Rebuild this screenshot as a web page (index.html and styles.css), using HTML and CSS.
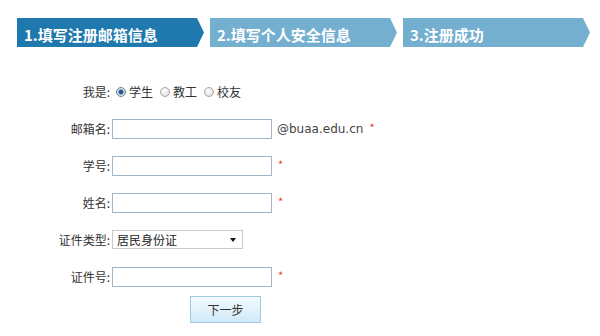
FILE: index.html
```html
<!DOCTYPE html>
<html lang="zh-CN">
<head>
    <meta charset="UTF-8">
    <title>注册</title>
    <link rel="stylesheet" href="styles.css">
</head>
<body>
    <div class="steps">
        <div class="step active">1.填写注册邮箱信息</div>
        <div class="step">2.填写个人安全信息</div>
        <div class="step">3.注册成功</div>
    </div>

    <form class="reg-form">
        <div class="row">
            <label class="lbl">我是:</label>
            <div class="field radios">
                <label class="opt"><input type="radio" name="who" checked><span>学生</span></label>
                <label class="opt"><input type="radio" name="who"><span>教工</span></label>
                <label class="opt"><input type="radio" name="who"><span>校友</span></label>
            </div>
        </div>
        <div class="row">
            <label class="lbl">邮箱名:</label>
            <div class="field">
                <input class="txt" type="text">
                <span class="suffix">@buaa.edu.cn</span>
                <span class="req">*</span>
            </div>
        </div>
        <div class="row">
            <label class="lbl">学号:</label>
            <div class="field">
                <input class="txt" type="text">
                <span class="req">*</span>
            </div>
        </div>
        <div class="row">
            <label class="lbl">姓名:</label>
            <div class="field">
                <input class="txt" type="text">
                <span class="req">*</span>
            </div>
        </div>
        <div class="row">
            <label class="lbl">证件类型:</label>
            <div class="field">
                <div class="select">
                    <span>居民身份证</span>
                    <span class="caret"></span>
                </div>
            </div>
        </div>
        <div class="row">
            <label class="lbl">证件号:</label>
            <div class="field">
                <input class="txt" type="text">
                <span class="req">*</span>
            </div>
        </div>
        <div class="actions">
            <button type="button" class="next-btn">下一步</button>
        </div>
    </form>
</body>
</html>
```

FILE: styles.css
```css
body {
    margin: 0;
    background: #fff;
    font-family: "Noto Sans CJK SC", "DejaVu Sans", sans-serif;
    font-size: 12px;
    color: #333;
}

.steps {
    display: flex;
    gap: 6px;
    padding: 18px 0 0 17px;
}

.step {
    width: 187px;
    height: 29px;
    box-sizing: border-box;
    padding: 5px 0 0 7px;
    line-height: 24px;
    font-size: 15px;
    font-weight: bold;
    color: #fff;
    background: #75afd0;
    clip-path: polygon(0 0, calc(100% - 7px) 0, 100% 50%, calc(100% - 7px) 100%, 0 100%);
}

.step.active {
    background: #1f79ae;
}

.reg-form {
    padding-top: 26px;
}

.row {
    display: flex;
    align-items: center;
    height: 37px;
}

.lbl {
    width: 110px;
    margin-right: 2px;
    text-align: right;
    color: #333;
}

.field {
    display: flex;
    align-items: center;
}

.radios {
    gap: 7px;
    margin-left: 4px;
}

.opt {
    display: flex;
    align-items: center;
    gap: 3px;
}

.opt input {
    appearance: none;
    margin: 0;
    width: 10px;
    height: 10px;
    border-radius: 50%;
    border: 1px solid #a7a7a7;
    background: radial-gradient(circle at 40% 35%, #fff, #d6d6d6);
}

.opt input:checked {
    border-color: #6d7f92;
    background: radial-gradient(circle, #1c4f7e 0, #2a6496 2px, #cfdbe6 3px, #eef2f6 5px);
}

.txt {
    width: 160px;
    height: 20px;
    box-sizing: border-box;
    margin: 0;
    border: 1px solid #9fb6cc;
    background: #fff;
    padding: 0 3px;
}

.suffix {
    margin-left: 5px;
    font-family: "DejaVu Sans", sans-serif;
    font-size: 12px;
    color: #444;
}

.req {
    margin-left: 6px;
    color: #e33;
    font-size: 11px;
    position: relative;
    top: -2px;
}

.select {
    width: 131px;
    height: 19px;
    box-sizing: border-box;
    border: 1px solid #c9c9c9;
    display: flex;
    align-items: center;
    justify-content: space-between;
    padding: 0 6px 0 4px;
    color: #222;
}

.caret {
    width: 0;
    height: 0;
    border-left: 3.5px solid transparent;
    border-right: 3.5px solid transparent;
    border-top: 4px solid #111;
}

.actions {
    padding: 1px 0 0 190px;
}

.next-btn {
    width: 71px;
    height: 27px;
    margin: 0;
    border: 1px solid #9ccbe2;
    background: linear-gradient(#f4fbff, #cfeaf8);
    font-family: "Noto Sans CJK SC", sans-serif;
    font-size: 12px;
    color: #333;
}
```
